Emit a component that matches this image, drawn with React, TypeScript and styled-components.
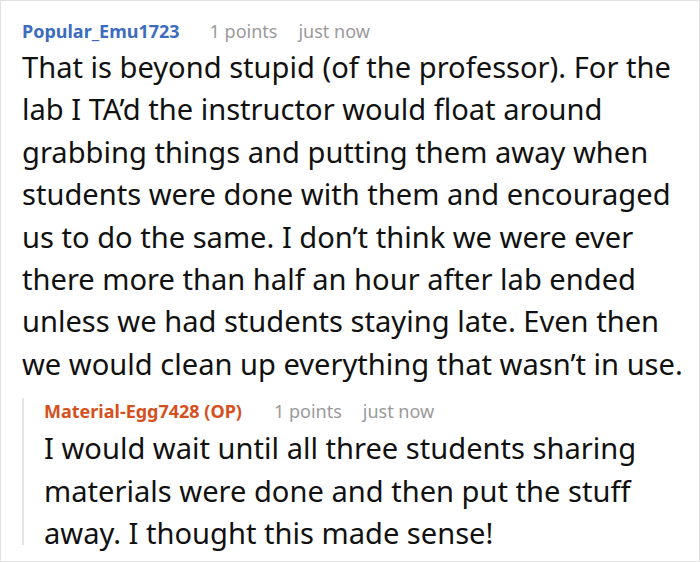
import React from 'react';
import styled, { createGlobalStyle } from 'styled-components';

const GlobalStyle = createGlobalStyle`
    html, body {
        margin: 0;
        padding: 0;
        background: #ffffff;
    }
    body {
        font-family: 'Noto Sans', 'Open Sans', sans-serif;
    }
`;

const Card = styled.div`
    box-sizing: border-box;
    width: 700px;
    height: 562px;
    overflow: hidden;
    border: 1px solid #e2e2e2;
    padding: 17px 0 0 21px;
    background: #ffffff;
`;

const Meta = styled.div`
    display: flex;
    align-items: baseline;
    height: 26px;
    font-size: 18px;
    line-height: 26px;
    white-space: nowrap;
`;

const Author = styled.span<{ $op?: boolean }>`
    font-weight: 700;
    color: ${props => (props.$op ? '#d4501d' : '#3d6cbf')};
    margin-right: ${props => (props.$op ? '32px' : '30px')};
`;

const Faded = styled.span`
    color: #9a9a9a;
    margin-right: 21px;
`;

const Body = styled.p<{ $nested?: boolean }>`
    margin: ${props => (props.$nested ? '3px' : '2px')} 0 0;
    font-size: 29.1px;
    line-height: 42.4px;
    color: #111111;
`;

const Reply = styled.div`
    margin-top: 13px;
    border-left: 2px solid #e6e6e6;
    padding-left: 20px;
    max-height: 147px;
    overflow: visible;
`;

type CommentProps = {
    author: string;
    op?: boolean;
    nested?: boolean;
    points: number;
    age: string;
    text: string;
};

function Comment({ author, op, nested, points, age, text }: CommentProps) {
    return (
        <>
            <Meta>
                <Author $op={op}>{author}</Author>
                <Faded>{points} points</Faded>
                <Faded>{age}</Faded>
            </Meta>
            <Body $nested={nested}>{text}</Body>
        </>
    );
}

export default function App() {
    return (
        <Card>
            <GlobalStyle />
            <Comment
                author="Popular_Emu1723"
                points={1}
                age="just now"
                text="That is beyond stupid (of the professor). For the lab I TA’d the instructor would float around grabbing things and putting them away when students were done with them and encouraged us to do the same. I don’t think we were ever there more than half an hour after lab ended unless we had students staying late. Even then we would clean up everything that wasn’t in use."
            />
            <Reply>
                <Comment
                    author="Material-Egg7428 (OP)"
                    op
                    nested
                    points={1}
                    age="just now"
                    text="I would wait until all three students sharing materials were done and then put the stuff away. I thought this made sense!"
                />
            </Reply>
        </Card>
    );
}
